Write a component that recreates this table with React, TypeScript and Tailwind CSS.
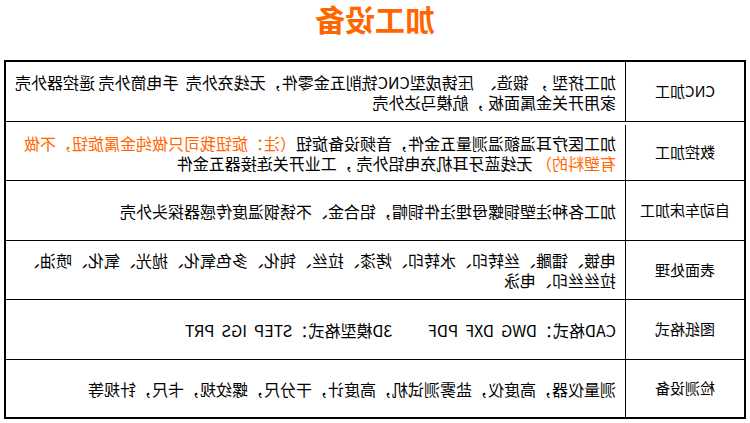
import React from 'react';

type Row = {
  label: string;
  h: string;
  lines: React.ReactNode[];
};

const Orange = ({ children }: { children: React.ReactNode }) => (
  <span className="text-[#ff6600]">{children}</span>
);

const rows: Row[] = [
  {
    label: 'CNC加工',
    h: 'h-[60px] border-b',
    lines: [
      '加工挤型 ， 锻造、  压铸成型CNC铣削五金零件，无线充外壳  手电筒外壳 遥控器外壳',
      '家用开关金属面板 ，航模马达外壳',
    ],
  },
  {
    label: '数控加工',
    h: 'h-[59px] border-b pt-[3px]',
    lines: [
      <>
        加工医疗耳温额温测量五金件，音频设备旋钮<Orange>（注：旋钮我司只做纯金属旋钮，不做</Orange>
      </>,
      <>
        <Orange>有塑料的）</Orange> 无线蓝牙耳机充电铝外壳 ，工业开关连接器五金件
      </>,
    ],
  },
  {
    label: '自动车床加工',
    h: 'h-[60px] border-b',
    lines: ['加工各种注塑铜螺母埋注件铜帽，铝合金、不锈钢温度传感器探头外壳'],
  },
  {
    label: '表面处理',
    h: 'h-[59px] border-b',
    lines: [
      '电镀、镭雕、丝转印、水转印、烤漆、拉丝、钝化、多色氧化、抛光、氧化、喷油、',
      '拉丝丝印、电泳',
    ],
  },
  {
    label: '图纸格式',
    h: 'h-[60px] border-b',
    lines: ['CAD格式：DWG  DXF  PDF          3D模型格式：STEP  IGS  PRT'],
  },
  {
    label: '检测设备',
    h: 'h-[57px]',
    lines: ['测量仪器，高度仪，盐雾测试机，高度计，干分尺，螺纹规，卡尺，针规等'],
  },
];

export default function App() {
  return (
    <div className="w-[750px] h-[423px] bg-white overflow-hidden -scale-x-100 font-['Noto_Sans_CJK_SC',sans-serif] text-black">
      {/* title */}
      <div className="h-[60px] flex justify-center">
        <h1 className="-mt-[4px] text-[30px] leading-[44px] font-bold text-[#ff6600]">加工设备</h1>
      </div>

      {/* equipment table */}
      <div className="ml-[4px] w-[742px] border-2 border-black flex flex-col">
        {rows.map((row) => (
          <div key={row.label} className={`flex border-black ${row.h}`}>
            <div className="w-[119px] shrink-0 border-r border-black flex items-center justify-center text-[15px]">
              {row.label}
            </div>
            <div className="flex-1 flex flex-col justify-center pl-[9px] text-[16px] leading-[20px] whitespace-pre">
              {row.lines.map((line, j) => (
                <div key={j}>{line}</div>
              ))}
            </div>
          </div>
        ))}
      </div>
    </div>
  );
}
